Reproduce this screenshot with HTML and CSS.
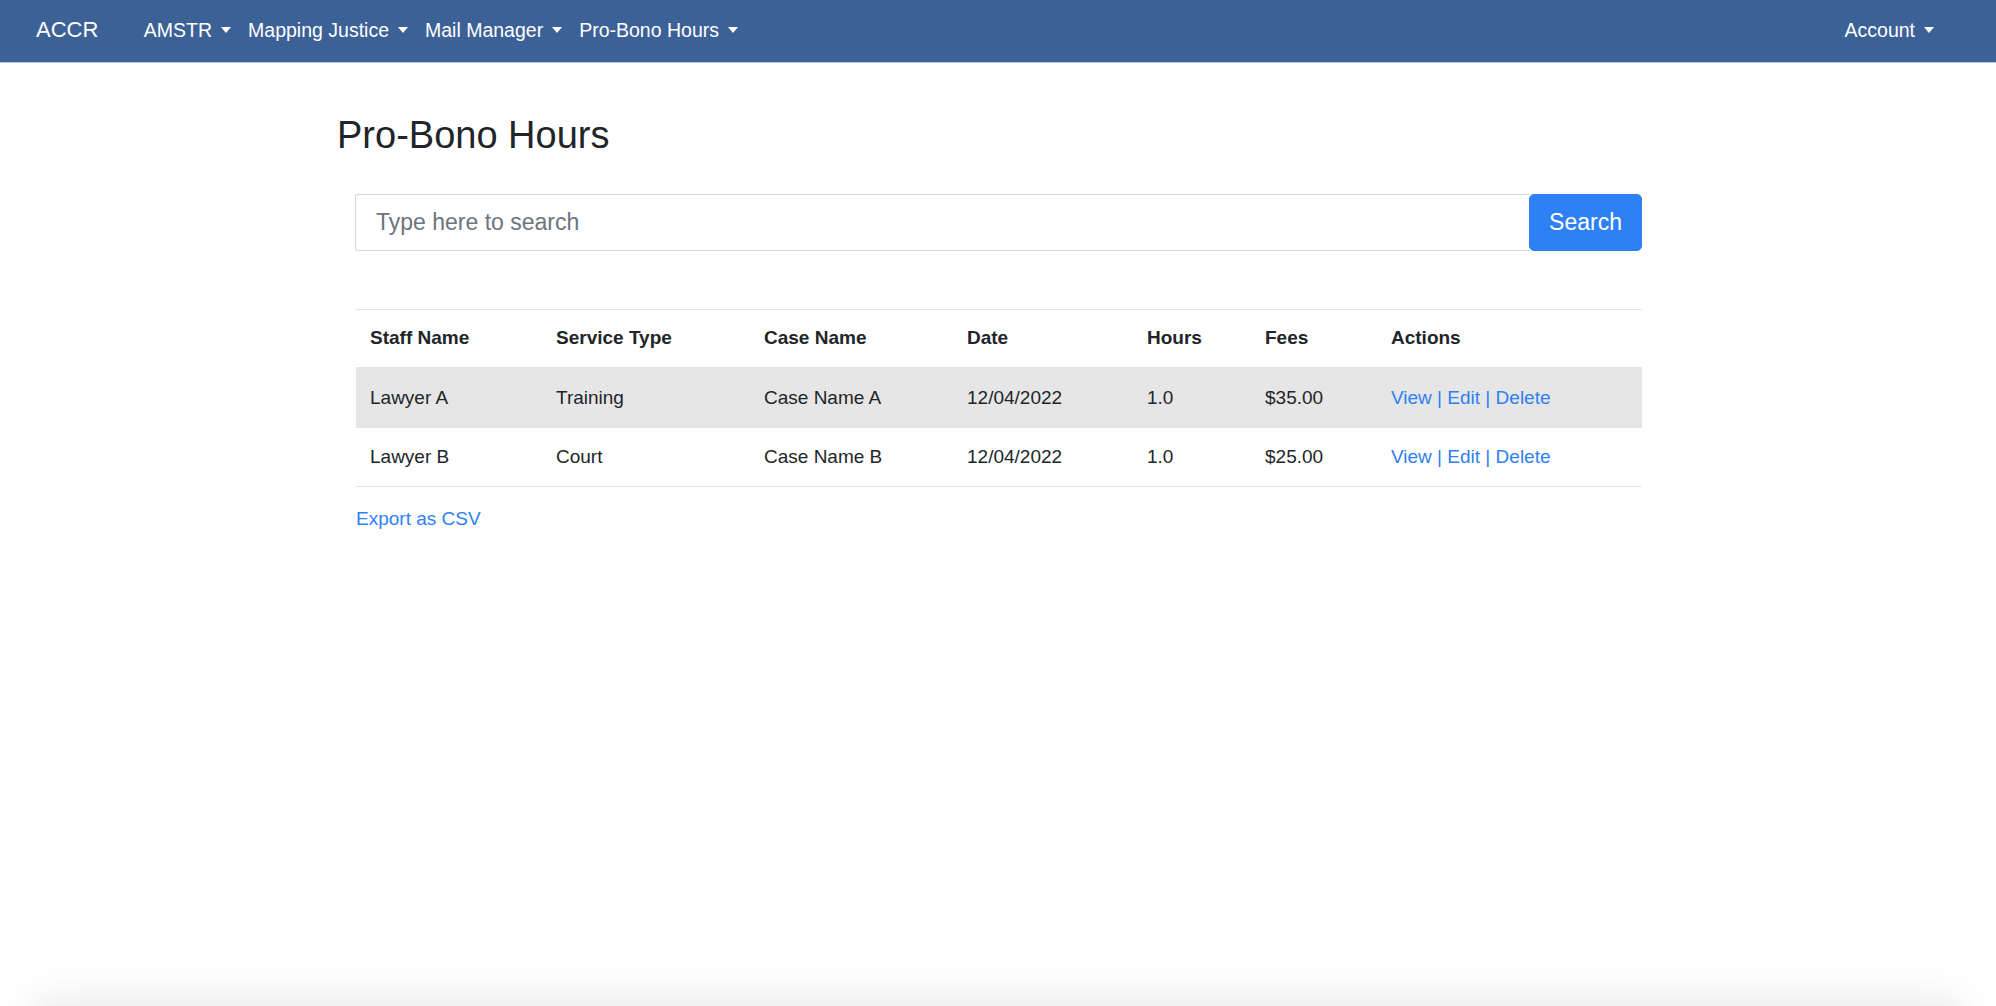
FILE: index.html
```html
<!DOCTYPE html>
<html lang="en">
<head>
<meta charset="utf-8">
<title>Pro-Bono Hours</title>
<link rel="stylesheet" href="styles.css">
</head>
<body>
<nav class="navbar">
  <a class="brand" href="#">ACCR</a>
  <ul class="nav-main">
    <li><a class="nav-link dropdown" href="#">AMSTR</a></li>
    <li><a class="nav-link dropdown" href="#">Mapping Justice</a></li>
    <li><a class="nav-link dropdown" href="#">Mail Manager</a></li>
    <li><a class="nav-link dropdown" href="#">Pro-Bono Hours</a></li>
  </ul>
  <ul class="nav-right">
    <li><a class="nav-link dropdown" href="#">Account</a></li>
  </ul>
</nav>

<main class="container">
  <h2 class="page-title">Pro-Bono Hours</h2>
  <div class="inner">
    <form class="search">
      <input class="search-input" type="text" placeholder="Type here to search">
      <button class="search-btn" type="button">Search</button>
    </form>

    <table class="hours-table">
      <thead>
        <tr>
          <th>Staff Name</th>
          <th>Service Type</th>
          <th>Case Name</th>
          <th>Date</th>
          <th>Hours</th>
          <th>Fees</th>
          <th>Actions</th>
        </tr>
      </thead>
      <tbody>
        <tr class="hover">
          <td>Lawyer A</td>
          <td>Training</td>
          <td>Case Name A</td>
          <td>12/04/2022</td>
          <td>1.0</td>
          <td>$35.00</td>
          <td><a href="#">View</a> | <a href="#">Edit</a> | <a href="#">Delete</a></td>
        </tr>
        <tr>
          <td>Lawyer B</td>
          <td>Court</td>
          <td>Case Name B</td>
          <td>12/04/2022</td>
          <td>1.0</td>
          <td>$25.00</td>
          <td><a href="#">View</a> | <a href="#">Edit</a> | <a href="#">Delete</a></td>
        </tr>
      </tbody>
    </table>

    <a class="export" href="#">Export as CSV</a>
  </div>
</main>

<div class="bottom-shadow"></div>
</body>
</html>
```
FILE: styles.css
```css
* { box-sizing: border-box; }

html, body {
  margin: 0;
  padding: 0;
  background: #fff;
}

body {
  font-family: "Liberation Sans", Arial, Helvetica, sans-serif;
  font-size: 19px;
  line-height: 28px;
  color: #212529;
  overflow: hidden;
  height: 1006px;
}

a { color: #2f7ff5; text-decoration: none; }

/* Navbar */
.navbar {
  height: 63px;
  background: #3c6196;
  border-bottom: 1px solid #b9c9dd;
  display: flex;
  align-items: center;
  padding: 0 36px 2px 36px;
}

.brand {
  color: #fff;
  font-size: 22px;
  line-height: 30px;
  margin-right: 37px;
}

.nav-main, .nav-right {
  list-style: none;
  margin: 0;
  padding: 0;
  display: flex;
  align-items: center;
}

.nav-right { margin-left: auto; }

.nav-link {
  color: #fff;
  display: inline-flex;
  align-items: center;
  padding: 0 8.5px;
  font-size: 19.5px;
}

.nav-right .nav-link { padding-right: 26px; }

.dropdown::after {
  content: "";
  display: inline-block;
  margin-left: 9px;
  border-top: 6px solid #fff;
  border-left: 5px solid transparent;
  border-right: 5px solid transparent;
  margin-top: 1px;
}

/* Content */
.container {
  width: 1322px;
  margin-left: 337px;
}

.page-title {
  margin: 49px 0 0 0;
  font-size: 38px;
  line-height: 46px;
  font-weight: 500;
  color: #212529;
}

.inner {
  margin: 0 17px 0 18px;
}

.search {
  display: flex;
  margin-top: 36px;
  height: 57px;
}

.search-input {
  flex: 1;
  height: 57px;
  border: 1px solid #d3d7dc;
  border-right: none;
  border-radius: 3px 0 0 3px;
  padding: 0 20px;
  font-family: inherit;
  font-size: 23px;
  color: #495057;
  outline: none;
}

.search-input::placeholder { color: #6c757d; }

.search-btn {
  width: 113px;
  height: 57px;
  border: 1px solid #2f7ff5;
  background: #2f7ff5;
  color: #fff;
  border-radius: 5px;
  font-family: inherit;
  font-size: 23px;
  padding: 0;
  margin-left: -1px;
}

/* Table */
.hours-table {
  width: calc(100% - 1px);
  margin: 58px 0 0 1px;
  border-collapse: collapse;
  table-layout: fixed;
}

.hours-table th,
.hours-table td {
  text-align: left;
  padding: 15px 14px;
  line-height: 28px;
  vertical-align: top;
  border-top: 1px solid #e2e5e9;
}

.hours-table th {
  font-weight: 700;
  padding: 14px 14px 15px;
  border-bottom: 2px solid #e2e5e9;
}

.hours-table th:nth-child(1) { width: 186px; }
.hours-table th:nth-child(2) { width: 208px; }
.hours-table th:nth-child(3) { width: 203px; }
.hours-table th:nth-child(4) { width: 180px; }
.hours-table th:nth-child(5) { width: 118px; }
.hours-table th:nth-child(6) { width: 126px; }

.hours-table tbody tr:last-child td { border-bottom: 1px solid #e2e5e9; }

.hours-table tr.hover td { background: #e6e6e6; }

.hours-table td a { color: #2f7ff5; }
.hours-table td:last-child { color: #2f7ff5; }

.export {
  display: inline-block;
  margin-top: 18px;
  margin-left: 1px;
  line-height: 28px;
}

/* Bottom shadow of element below fold */
.bottom-shadow {
  position: fixed;
  left: 40px;
  right: 40px;
  bottom: -40px;
  height: 40px;
  box-shadow: 0 0 40px 6px rgba(0, 0, 0, 0.09);
  background: #f2f2f2;
}
```
